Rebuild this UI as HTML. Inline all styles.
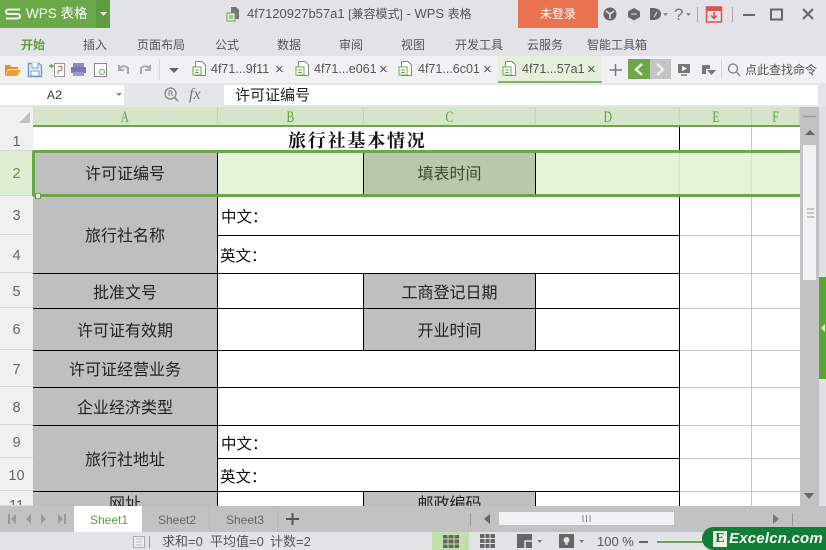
<!DOCTYPE html>
<html lang="zh"><head><meta charset="utf-8"><title>WPS 表格</title>
<style>
html,body{margin:0;padding:0;width:826px;height:550px;overflow:hidden;background:#e2e3e7}
body{position:relative;font-family:"Liberation Sans","Noto Sans CJK SC",sans-serif}
div,span,svg{position:absolute;box-sizing:border-box}
.t{white-space:nowrap;line-height:1}
.m{font-size:12px;color:#555;top:38px;white-space:nowrap;line-height:14px}
.tab{font-size:12.500px;color:#555;top:62px;white-space:nowrap;line-height:14px}
.x{font-size:15px;color:#555;top:63px;white-space:nowrap;line-height:14px}
.h{top:107px;height:19px;background:#d6e5c8;border-right:1px solid #c4d3b8;color:#5f9d39;font:16px/21px "Liberation Serif",serif;text-align:center}
.h b{font-weight:normal;display:inline-block;transform:scaleX(.72)}
.r{left:0;width:33px;background:#f0f0f0;color:#666;font:14.500px/1 "Liberation Sans",sans-serif;text-align:center;display:flex;align-items:center;justify-content:center;border-bottom:1px solid #d8d8d8;padding-top:5px}
.g{background:#bfbfbf}
.c{font:16px/1 "Noto Sans CJK SC",sans-serif;color:#222;display:flex;align-items:center;justify-content:center;white-space:nowrap;padding-bottom:2px}
.l{font:15.500px/1 "Noto Sans CJK SC",sans-serif;color:#111;white-space:nowrap}
.k{background:#000}
.e{background:#c6c6c6}
.st{font-size:12px;color:#666;line-height:14px;white-space:nowrap}
i{font-style:normal}
</style></head><body>

<!-- title bar -->
<div style="left:0;top:0;width:110px;height:28px;background:#6aa84a"></div>
<div style="left:96px;top:0;width:14px;height:28px;background:#5f9c41"></div>
<svg style="left:5px;top:8px" width="16" height="13" viewBox="0 0 16 13"><path d="M15 1.500H3.500Q1 1.500 1 3.700Q1 6 3.500 6H12.500Q15 6 15 8.200Q15 10.500 12.500 10.500H1" fill="none" stroke="#fff" stroke-width="1.800"/></svg>
<div class="t" style="left:26px;top:7px;font-size:13.500px;color:#fff">WPS 表格</div>
<svg style="left:100px;top:12px" width="7" height="5"><path d="M0 0H7L3.500 4Z" fill="#e8f3de"/></svg>
<svg style="left:226px;top:6px" width="15" height="16"><path d="M5 1H10L13 4V13H5Z" fill="#777"/><rect x="1" y="7" width="8" height="8" fill="#e2e3e7" stroke="#6aa84a"/><path d="M3 10H7M3 12H7" stroke="#6aa84a"/></svg>
<div class="t" style="left:247px;top:7px;font-size:13px;color:#555">4f7120927b57a1 <i style="font-size:12px">[兼容模式]</i> - WPS <i style="font-size:12px">表格</i></div>
<div class="t" style="left:518px;top:0;width:80px;height:28px;background:#e9724f;color:#fff;font-size:12px;line-height:28px;text-align:center">未登录</div>
<svg style="left:602px;top:6px" width="224" height="17" fill="#666">
<circle cx="8" cy="8" r="6.500"/><path d="M4 5L8 8L12 5M8 8V13" stroke="#e2e3e7" fill="none" stroke-width="1.500"/>
<path d="M32 2L38 5.500V11L32 14.500L26 11V5.500Z"/><path d="M29 8H35" stroke="#e2e3e7"/>
<path d="M48 2H52Q59 3 59 8T52 14H48Z"/><path d="M52 11L55 6" stroke="#e2e3e7"/><path d="M61 7H66L63.500 10Z" fill="#888"/>
<path d="M84 7H89L86.500 10Z" fill="#888"/>
<path d="M95.500 1V16M130.500 1V16" stroke="#aaa" fill="none"/>
<rect x="104.500" y="1" width="15" height="15" fill="none" stroke="#d9534f" stroke-width="1.500"/><rect x="104.500" y="1" width="15" height="4" fill="#d9534f"/>
<path d="M112 6V12M109 9.500L112 12.500L115 9.500" stroke="#d9534f" fill="none" stroke-width="1.500"/>
<path d="M141 9H153" stroke="#666" stroke-width="2"/>
<rect x="169" y="3.500" width="11" height="10" fill="none" stroke="#666" stroke-width="2"/>
<path d="M201 3L211 13M211 3L201 13" stroke="#666" stroke-width="2"/>
</svg>
<div class="t" style="left:674px;top:6px;font-size:17px;color:#777">?</div>

<!-- menu -->
<div class="m" style="left:21px;color:#5f9d39;font-weight:bold">开始</div>
<div class="m" style="left:83px">插入</div>
<div class="m" style="left:137px">页面布局</div>
<div class="m" style="left:215px">公式</div>
<div class="m" style="left:277px">数据</div>
<div class="m" style="left:339px">审阅</div>
<div class="m" style="left:401px">视图</div>
<div class="m" style="left:455px">开发工具</div>
<div class="m" style="left:527px">云服务</div>
<div class="m" style="left:587px">智能工具箱</div>

<!-- toolbar -->
<div style="left:0;top:56px;width:826px;height:27px;background:#f1f1f3"></div>
<svg style="left:0;top:56px" width="190" height="27">
<path d="M5 9H10L11 11H18V13H8L5 19Z" fill="#e98c2e"/><path d="M8 14H21L17 20H5Z" fill="#f0a030"/>
<path d="M28.500 7.500H39L41.500 10V20.500H28.500Z" fill="#eaf1fb" stroke="#6f9fd8" stroke-width="1.500"/><path d="M32 7V12H38V7" fill="#fff" stroke="#6f9fd8"/><rect x="31" y="15" width="8" height="5" fill="#fff" stroke="#6f9fd8"/>
<rect x="54.500" y="7.500" width="10" height="13" fill="#fff" stroke="#999"/><path d="M58 11Q62 9 62 12T58 15V18" stroke="#d9534f" fill="none"/><path d="M49 10H54M51.500 8V12" stroke="#6aa84a" stroke-width="1.500"/>
<rect x="73" y="7" width="11" height="4" fill="#8a8ac0"/><rect x="71" y="11" width="15" height="6" fill="#7878b8"/><rect x="73" y="16" width="11" height="4" fill="#9a9ac8"/>
<rect x="94.500" y="7.500" width="12" height="13" fill="#fff" stroke="#888"/><circle cx="102" cy="16" r="2.500" fill="none" stroke="#6aa84a"/>
<path d="M119 13Q123 8 128 12V18M119 9V14H124" stroke="#aaa" fill="none" stroke-width="2"/>
<path d="M150 13Q146 8 141 12V18M150 9V14H145" stroke="#aaa" fill="none" stroke-width="2"/>
<path d="M159.500 3V24" stroke="#d8d8d8"/>
<path d="M169 12H179L174 17Z" fill="#666"/>
</svg>
<svg style="left:192px;top:60px" width="15" height="18"><path d="M3.500 1.500H10L13.500 5V15.500H3.500Z" fill="#fff" stroke="#888"/><rect x="1" y="7" width="8" height="8" fill="#fff" stroke="#6aa84a"/><path d="M3 10H7M3 12.500H7" stroke="#6aa84a"/></svg>
<div class="tab" style="left:211px">4f71...9f11</div><div class="x" style="left:275px">×</div>
<svg style="left:295px;top:60px" width="15" height="18"><path d="M3.500 1.500H10L13.500 5V15.500H3.500Z" fill="#fff" stroke="#888"/><rect x="1" y="7" width="8" height="8" fill="#fff" stroke="#6aa84a"/><path d="M3 10H7M3 12.500H7" stroke="#6aa84a"/></svg>
<div class="tab" style="left:314px">4f71...e061</div><div class="x" style="left:379px">×</div>
<svg style="left:398px;top:60px" width="15" height="18"><path d="M3.500 1.500H10L13.500 5V15.500H3.500Z" fill="#fff" stroke="#888"/><rect x="1" y="7" width="8" height="8" fill="#fff" stroke="#6aa84a"/><path d="M3 10H7M3 12.500H7" stroke="#6aa84a"/></svg>
<div class="tab" style="left:418px">4f71...6c01</div><div class="x" style="left:483px">×</div>
<div style="left:498px;top:56px;width:104px;height:27px;background:#e5efd9;border-bottom:2px solid #85b26a"></div>
<svg style="left:502px;top:60px" width="15" height="18"><path d="M3.500 1.500H10L13.500 5V15.500H3.500Z" fill="#fff" stroke="#888"/><rect x="1" y="7" width="8" height="8" fill="#fff" stroke="#6aa84a"/><path d="M3 10H7M3 12.500H7" stroke="#6aa84a"/></svg>
<div class="tab" style="left:522px">4f71...57a1</div><div class="x" style="left:587px">×</div>
<svg style="left:606px;top:56px" width="220" height="27">
<path d="M3.500 14H16M9.500 8V20" stroke="#777" stroke-width="1.500"/>
<rect x="22" y="3" width="22" height="20" fill="#6aa84a"/><path d="M36 8L30 13.500L36 19" stroke="#e9f3e0" stroke-width="2.500" fill="none"/>
<rect x="44" y="3" width="21" height="20" fill="#c4c4c4"/><path d="M51 8L57 13.500L51 19" stroke="#eee" stroke-width="2.500" fill="none"/>
<rect x="72" y="8" width="12" height="9" fill="#777"/><path d="M76 10L81 12.500L76 15Z" fill="#fff"/><path d="M75 19H81" stroke="#777" stroke-width="1.500"/>
<path d="M96 9H104V13H100V18H96Z" fill="#777"/><path d="M101 14H110L105.500 19Z" fill="#777"/>
<path d="M115.500 4V23" stroke="#d4d4d4"/>
<circle cx="127" cy="12.500" r="4.500" fill="none" stroke="#777" stroke-width="1.200"/><path d="M130.500 16L134 20" stroke="#777" stroke-width="1.200"/>
</svg>
<div class="tab" style="left:745px;font-size:12px;top:63px">点此查找命令</div>

<!-- formula bar -->
<div style="left:0;top:83px;width:826px;height:24px;background:#e6e6e8"></div>
<div style="left:0;top:85px;width:124px;height:20px;background:#fff"></div>
<div class="t" style="left:47px;top:89px;font:13px/1 'Liberation Mono',monospace;color:#444">A2</div>
<svg style="left:116px;top:93px" width="6" height="4"><path d="M0 0H6L3 3Z" fill="#888"/></svg>
<svg style="left:163px;top:86px" width="18" height="18"><circle cx="7.500" cy="7.500" r="5.500" fill="none" stroke="#888" stroke-width="1.300"/><path d="M11.500 11.500L15 15" stroke="#888" stroke-width="1.500"/><path d="M6 10V5H8.500Q10 6.500 8 7.500L10 10" fill="none" stroke="#888"/></svg>
<div class="t" style="left:189px;top:87px;font:italic 16px/1 'Liberation Serif',serif;color:#777">fx</div>
<div style="left:224px;top:85px;width:594px;height:20px;background:#fff"></div>
<div class="l" style="left:235px;top:87px;font-size:15px;color:#222">许可证编号</div>

<!-- corner and headers -->
<div style="left:0;top:107px;width:33px;height:19px;background:#f0f0f0"></div>
<svg style="left:19px;top:112px" width="12" height="12"><path d="M11 0V11H0Z" fill="#c0c0c0"/></svg>
<div class="h" style="left:33px;width:185px"><b>A</b></div>
<div class="h" style="left:218px;width:146px"><b>B</b></div>
<div class="h" style="left:364px;width:172px"><b>C</b></div>
<div class="h" style="left:536px;width:144px"><b>D</b></div>
<div class="h" style="left:680px;width:72px"><b>E</b></div>
<div class="h" style="left:752px;width:48px"><b>F</b></div>

<!-- row headers -->
<div class="r" style="top:126px;height:25px;padding-top:9px">1</div>
<div class="r" style="top:151px;height:45px;background:#dfeed2;color:#5f9d39;padding-top:3px">2</div>
<div class="r" style="top:196px;height:39px;padding-top:3px">3</div>
<div class="r" style="top:235px;height:38px">4</div>
<div class="r" style="top:273px;height:35px">5</div>
<div class="r" style="top:308px;height:42px;padding-top:3px">6</div>
<div class="r" style="top:350px;height:37px">7</div>
<div class="r" style="top:387px;height:38px">8</div>
<div class="r" style="top:425px;height:33px">9</div>
<div class="r" style="top:458px;height:33px">10</div>
<div class="r" style="top:491px;height:15px;overflow:hidden;align-items:flex-start;padding-top:8px">11</div>

<!-- sheet base -->
<div style="left:33px;top:126px;width:767px;height:380px;background:#fff"></div>

<!-- selected row -->
<div style="left:217px;top:151px;width:583px;height:45px;background:#e3f5d4"></div>

<!-- grey cells -->
<div class="g c" style="left:33px;top:153px;width:184px;height:41px;padding-bottom:3px">许可证编号</div>
<div class="c" style="left:364px;top:153px;width:171px;height:41px;background:#b7c9a8;color:#3c4a34;padding-bottom:3px">填表时间</div>
<div class="g c" style="left:33px;top:196px;width:184px;height:77px">旅行社名称</div>
<div class="g c" style="left:33px;top:274px;width:184px;height:34px;padding-bottom:0">批准文号</div>
<div class="g c" style="left:364px;top:274px;width:171px;height:34px;padding-bottom:0">工商登记日期</div>
<div class="g c" style="left:33px;top:309px;width:184px;height:41px">许可证有效期</div>
<div class="g c" style="left:364px;top:309px;width:171px;height:41px">开业时间</div>
<div class="g c" style="left:33px;top:351px;width:184px;height:36px">许可证经营业务</div>
<div class="g c" style="left:33px;top:388px;width:184px;height:37px">企业经济类型</div>
<div class="g c" style="left:33px;top:426px;width:184px;height:65px">旅行社地址</div>
<div class="g" style="left:33px;top:492px;width:184px;height:14px;overflow:hidden"><div class="c" style="left:0;top:0;width:184px;height:22px">网址</div></div>
<div class="g" style="left:364px;top:492px;width:171px;height:14px;overflow:hidden"><div class="c" style="left:0;top:0;width:171px;height:22px">邮政编码</div></div>

<!-- title and text -->
<div class="t" style="left:288px;top:131px;font:bold 18px/1 'Noto Serif CJK SC',serif;letter-spacing:1.800px;color:#111">旅行社基本情况</div>
<div class="l" style="left:221px;top:209px">中文：</div>
<div class="l" style="left:220px;top:248px">英文：</div>
<div class="l" style="left:221px;top:436px">中文：</div>
<div class="l" style="left:220px;top:469px">英文：</div>

<!-- gray gridlines for E/F -->
<div class="e" style="left:751px;top:126px;width:1px;height:380px"></div>
<div class="e" style="left:679px;top:235px;width:121px;height:1px"></div>
<div class="e" style="left:679px;top:273px;width:121px;height:1px"></div>
<div class="e" style="left:679px;top:308px;width:121px;height:1px"></div>
<div class="e" style="left:679px;top:350px;width:121px;height:1px"></div>
<div class="e" style="left:679px;top:387px;width:121px;height:1px"></div>
<div class="e" style="left:679px;top:425px;width:121px;height:1px"></div>
<div class="e" style="left:679px;top:458px;width:121px;height:1px"></div>
<div class="e" style="left:679px;top:491px;width:121px;height:1px"></div>

<!-- black lines -->
<div class="k" style="left:679px;top:126px;width:1px;height:380px"></div>
<div style="left:679px;top:151px;width:1px;height:45px;background:#d2e3c3"></div>
<div style="left:751px;top:151px;width:1px;height:45px;background:#d2e3c3"></div>
<div class="k" style="left:217px;top:151px;width:1px;height:355px"></div>
<div class="k" style="left:363px;top:151px;width:1px;height:45px"></div>
<div class="k" style="left:535px;top:151px;width:1px;height:45px"></div>
<div class="k" style="left:363px;top:273px;width:1px;height:77px"></div>
<div class="k" style="left:535px;top:273px;width:1px;height:77px"></div>
<div class="k" style="left:363px;top:491px;width:1px;height:15px"></div>
<div class="k" style="left:535px;top:491px;width:1px;height:15px"></div>
<div class="k" style="left:217px;top:235px;width:462px;height:1px"></div>
<div class="k" style="left:33px;top:273px;width:646px;height:1px"></div>
<div class="k" style="left:33px;top:308px;width:646px;height:1px"></div>
<div class="k" style="left:33px;top:350px;width:646px;height:1px"></div>
<div class="k" style="left:33px;top:387px;width:646px;height:1px"></div>
<div class="k" style="left:33px;top:425px;width:646px;height:1px"></div>
<div class="k" style="left:217px;top:458px;width:462px;height:1px"></div>
<div class="k" style="left:33px;top:491px;width:646px;height:1px"></div>

<!-- selection lines -->
<div style="left:33px;top:125px;width:767px;height:2px;background:#6aa84a"></div>
<div style="left:33px;top:150px;width:767px;height:3px;background:#6aa84a"></div>
<div style="left:33px;top:194px;width:767px;height:3px;background:#6aa84a"></div>
<div style="left:32px;top:151px;width:3px;height:45px;background:#6aa84a"></div>
<div style="left:35px;top:193px;width:6px;height:6px;background:#e3f5d4;border:1px solid #6aa84a"></div>

<!-- vertical scrollbar -->
<div style="left:800px;top:107px;width:19px;height:399px;background:#c2c2c2"></div>
<div style="left:803px;top:145px;width:13px;height:135px;background:#f1f1f3"></div>
<svg style="left:800px;top:107px" width="19" height="30"><path d="M3 9.500H16" stroke="#999" stroke-width="1.500"/><path d="M5 28L10 23L15 28Z" fill="#666"/></svg>
<svg style="left:806px;top:208px" width="9" height="10"><path d="M1 1H8M1 5H8M1 9H8" stroke="#999"/></svg>
<svg style="left:804px;top:493px" width="10" height="7"><path d="M0 0H10L5 6Z" fill="#666"/></svg>
<div style="left:819px;top:107px;width:7px;height:399px;background:#e0e0e4"></div>
<div style="left:819px;top:277px;width:7px;height:102px;background:#5ba62f"></div>
<svg style="left:821px;top:324px" width="4" height="8"><path d="M4 0V8L0 4Z" fill="#dff3c9"/></svg>

<!-- sheet tabs -->
<div style="left:0;top:506px;width:826px;height:26px;background:#c2c2c2"></div>
<svg style="left:8px;top:512px" width="60" height="14" fill="#999">
<path d="M1 2V12" stroke="#999" stroke-width="2"/><path d="M8 2L3 7L8 12Z"/>
<path d="M23 2L18 7L23 12Z"/><path d="M33 2L38 7L33 12Z"/>
<path d="M50 2L55 7L50 12Z"/><path d="M57 2V12" stroke="#999" stroke-width="2"/>
</svg>
<div style="left:74px;top:506px;width:68px;height:26px;background:#fff"></div>
<div class="st" style="left:90px;top:513px;color:#5f9d39">Sheet1</div>
<div class="st" style="left:158px;top:513px">Sheet2</div>
<div class="st" style="left:226px;top:513px">Sheet3</div>
<div style="left:209px;top:506px;width:1px;height:26px;background:#b8b8b8"></div>
<div style="left:277px;top:506px;width:1px;height:26px;background:#b8b8b8"></div>
<svg style="left:286px;top:512px" width="14" height="14"><path d="M0 7H13M6.500 1V13" stroke="#555" stroke-width="2"/></svg>
<div style="left:470px;top:513px;width:1px;height:13px;background:#999"></div>
<svg style="left:484px;top:514px" width="6" height="10"><path d="M6 0V10L0 5Z" fill="#666"/></svg>
<div style="left:499px;top:512px;width:175px;height:13px;background:#f1f1f3"></div>
<svg style="left:582px;top:514px" width="9" height="9"><path d="M1 1V8M4.500 1V8M8 1V8" stroke="#888"/></svg>
<svg style="left:773px;top:514px" width="6" height="10"><path d="M0 0V10L6 5Z" fill="#777"/></svg>
<div style="left:792px;top:513px;width:1px;height:13px;background:#999"></div>

<!-- status bar -->
<div style="left:0;top:532px;width:826px;height:18px;background:#e2e3e7"></div>
<svg style="left:131px;top:534px" width="20" height="15"><rect x="2.500" y="2.500" width="11" height="11" fill="#eee" stroke="#aaa"/><path d="M5 5H11M5 8H11M5 11H11" stroke="#bbb"/><path d="M18.500 2V14" stroke="#999"/></svg>
<div class="st" style="left:162px;top:535px;font-size:13px;color:#555">求和=0</div>
<div class="st" style="left:210px;top:535px;font-size:13px;color:#555">平均值=0</div>
<div class="st" style="left:270px;top:535px;font-size:13px;color:#555">计数=2</div>
<div style="left:432px;top:532px;width:37px;height:18px;background:#c1e0ac"></div>
<svg style="left:443px;top:534px" width="16" height="15"><rect x="0" y="1" width="16" height="13" fill="#666"/><path d="M0 5H16M0 10H16M5 1V14M11 1V14" stroke="#c1e0ac"/></svg>
<svg style="left:480px;top:534px" width="15" height="15"><rect x="0" y="0" width="15" height="14" fill="#666"/><path d="M0 4.500H15M0 9.500H15M5 0V14M10 0V14" stroke="#e2e3e7"/></svg>
<svg style="left:517px;top:534px" width="26" height="15"><rect x="0" y="0" width="15" height="14" fill="#666"/><path d="M8 14V7H15" stroke="#e2e3e7" fill="none" stroke-width="1.500"/><path d="M20.500 6H25L22.750 9Z" fill="#777"/></svg>
<svg style="left:559px;top:534px" width="26" height="15"><rect x="0" y="0" width="15" height="14" fill="#666"/><circle cx="7.500" cy="6" r="3" fill="#e2e3e7"/><path d="M6 10H9" stroke="#e2e3e7" stroke-width="1.500"/><path d="M20.500 6H25L22.750 9Z" fill="#777"/></svg>
<div class="st" style="left:597px;top:535px;font-size:13px;color:#555">100 %</div>
<div style="left:639px;top:541px;width:9px;height:2px;background:#666"></div>
<div style="left:657px;top:541px;width:60px;height:2px;background:#6aa84a"></div>

<!-- watermark -->
<div style="left:702px;top:527px;width:124px;height:23px;background:#117e35;border-radius:12px 0 0 12px"></div>
<div style="left:814px;top:527px;width:12px;height:23px;background:#117e35;border-radius:0 10px 10px 0"></div>
<div class="t" style="left:713px;top:531px;width:14px;height:16px;background:#e9f3e0;color:#117e35;font:bold 14px/16px 'Liberation Serif',serif;text-align:center">E</div>
<div class="t" style="left:729px;top:531px;font:italic bold 15px/16px 'Liberation Sans',sans-serif;color:#fff;letter-spacing:.2px">Excelcn.com</div>

</body></html>
